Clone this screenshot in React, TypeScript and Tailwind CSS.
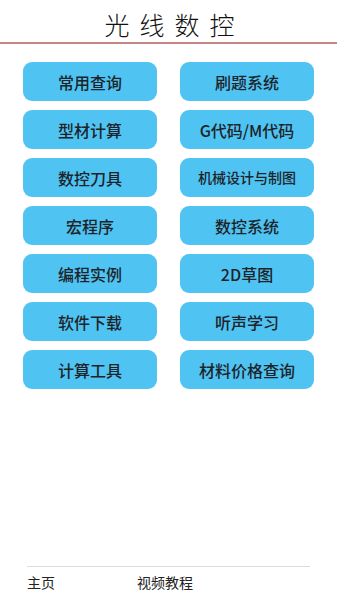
const items: [string, string][] = [
  ["常用查询", "刷题系统"],
  ["型材计算", "G代码/M代码"],
  ["数控刀具", "机械设计与制图"],
  ["宏程序", "数控系统"],
  ["编程实例", "2D草图"],
  ["软件下载", "听声学习"],
  ["计算工具", "材料价格查询"],
];

const font = { fontFamily: '"Noto Sans CJK SC", "Noto Sans", sans-serif' };

function Tile({ label }: { label: string }) {
  const small = label === "机械设计与制图";
  return (
    <button
      type="button"
      className={`flex h-[39px] w-[134px] items-center justify-center rounded-[9px] bg-[#4fc3f2] font-medium text-[#1d2329] ${small ? "text-[14px]" : "text-[16px]"}`}
    >
      {label}
    </button>
  );
}

export default function App() {
  return (
    <div className="flex h-[600px] w-[337px] flex-col bg-white" style={font}>
      <header className="flex h-[44px] items-center justify-center border-b-2 border-[#c98585] pt-[8px]">
        <h1
          className="pl-[12px] text-[25px] tracking-[10px] text-[#111]"
          style={{ fontFamily: '"Noto Sans CJK SC", serif', fontWeight: 300 }}
        >
          光线数控
        </h1>
      </header>
      <main className="flex flex-1 flex-col gap-[9px] pt-[18px]">
        {items.map(([a, b]) => (
          <div key={a} className="flex justify-between pl-[23px] pr-[23px]">
            <Tile label={a} />
            <Tile label={b} />
          </div>
        ))}
      </main>
      <footer className="mx-[27px] mb-[3px] flex h-[31px] items-center border-t border-[#dcdcdc] text-[14px] text-[#222]">
        <span className="w-[110px]">主页</span>
        <span>视频教程</span>
      </footer>
    </div>
  );
}
